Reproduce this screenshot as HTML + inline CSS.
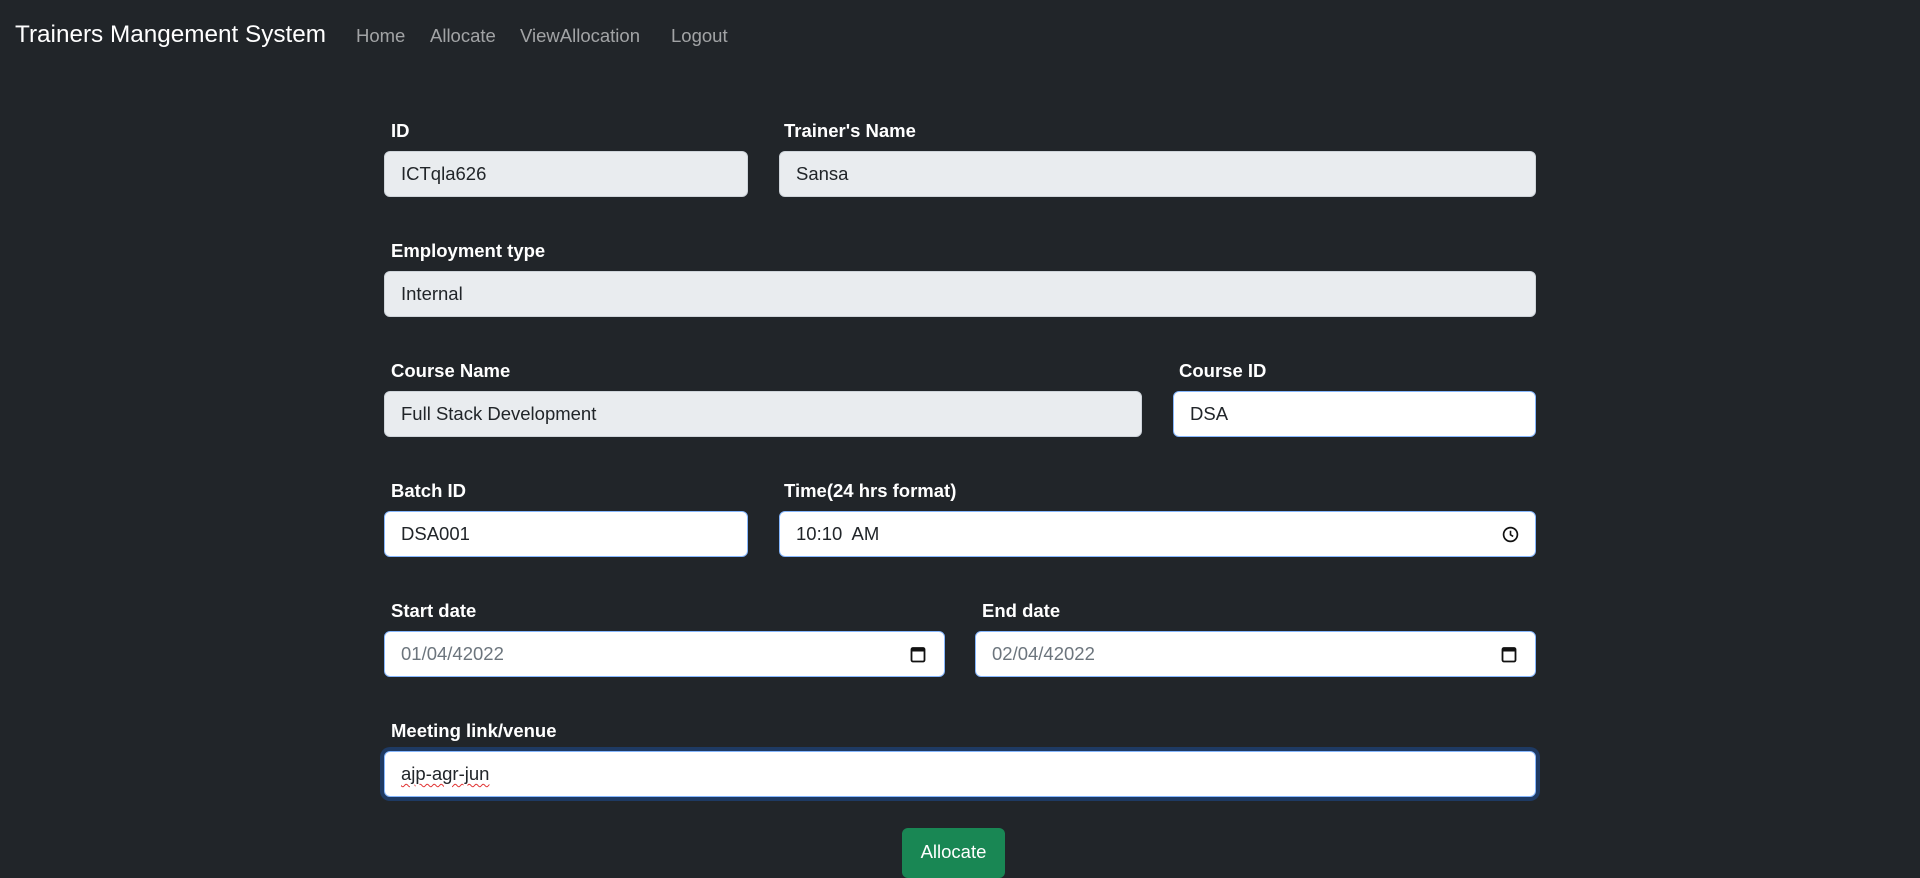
<!DOCTYPE html>
<html><head><meta charset="utf-8"><style>
*{box-sizing:border-box;margin:0;padding:0}
body{width:1920px;height:875px;background:#212529;font-family:"Liberation Sans",sans-serif;overflow:hidden;position:relative;color:#fff}
.a{position:absolute}
.brand{left:15px;top:21px;font-size:24.3px;color:#fff;white-space:nowrap}
.nav{top:25px;font-size:18.5px;color:rgba(255,255,255,.58)}
.lbl{font-size:18.5px;font-weight:bold;color:#fff}
.in{height:46px;border:1px solid #ced4da;border-radius:6px;background:#fff;font-size:18.5px;color:#212529;padding-left:16px;line-height:44px;white-space:nowrap}
.dis{background:#e9ecef}
.foc{border-color:#86b7fe}
.ring{box-shadow:0 0 0 4px #1e3a63}
.gray{color:#6c757d}
.btn{left:902px;top:828px;width:103px;height:50px;background:#198754;border-radius:6px;color:#fff;font-size:18.5px;text-align:center;line-height:48px}
</style></head><body>
<div class="a brand">Trainers Mangement System</div>
<div class="a nav" style="left:356px">Home</div>
<div class="a nav" style="left:430px">Allocate</div>
<div class="a nav" style="left:520px">ViewAllocation</div>
<div class="a nav" style="left:671px">Logout</div>

<div class="a lbl" style="left:391px;top:120px">ID</div>
<div class="a lbl" style="left:784px;top:120px">Trainer's Name</div>
<div class="a in dis" style="left:384px;top:151px;width:364px">ICTqla626</div>
<div class="a in dis" style="left:779px;top:151px;width:757px">Sansa</div>

<div class="a lbl" style="left:391px;top:240px">Employment type</div>
<div class="a in dis" style="left:384px;top:271px;width:1152px">Internal</div>

<div class="a lbl" style="left:391px;top:360px">Course Name</div>
<div class="a lbl" style="left:1179px;top:360px">Course ID</div>
<div class="a in dis" style="left:384px;top:391px;width:758px">Full Stack Development</div>
<div class="a in foc" style="left:1173px;top:391px;width:363px">DSA</div>

<div class="a lbl" style="left:391px;top:480px">Batch ID</div>
<div class="a lbl" style="left:784px;top:480px">Time(24 hrs format)</div>
<div class="a in foc" style="left:384px;top:511px;width:364px">DSA001</div>
<div class="a in foc" style="left:779px;top:511px;width:757px">10:10&nbsp; AM
<svg class="a" style="right:16px;top:14px" width="17" height="17" viewBox="0 0 16 16"><circle cx="8" cy="8" r="6.5" fill="none" stroke="#111" stroke-width="1.6"/><path d="M8 4.5V8.3L10.5 9.8" fill="none" stroke="#111" stroke-width="1.5"/></svg></div>

<div class="a lbl" style="left:391px;top:600px">Start date</div>
<div class="a lbl" style="left:982px;top:600px">End date</div>
<div class="a in foc gray" style="left:384px;top:631px;width:561px">01/04/42022
<svg class="a" style="right:18px;top:13px" width="16" height="18" viewBox="0 0 16 18"><rect x="1.5" y="3" width="13" height="13.5" rx="1.5" fill="none" stroke="#111" stroke-width="1.8"/><rect x="1.5" y="3" width="13" height="3.5" fill="#111"/></svg></div>
<div class="a in foc gray" style="left:975px;top:631px;width:561px">02/04/42022
<svg class="a" style="right:18px;top:13px" width="16" height="18" viewBox="0 0 16 18"><rect x="1.5" y="3" width="13" height="13.5" rx="1.5" fill="none" stroke="#111" stroke-width="1.8"/><rect x="1.5" y="3" width="13" height="3.5" fill="#111"/></svg></div>

<div class="a lbl" style="left:391px;top:720px">Meeting link/venue</div>
<div class="a in foc ring" style="left:384px;top:751px;width:1152px"><span style="text-decoration:underline wavy #e03030;text-decoration-thickness:1px;text-underline-offset:3px">ajp-agr-jun</span></div>

<div class="a btn">Allocate</div>
</body></html>
